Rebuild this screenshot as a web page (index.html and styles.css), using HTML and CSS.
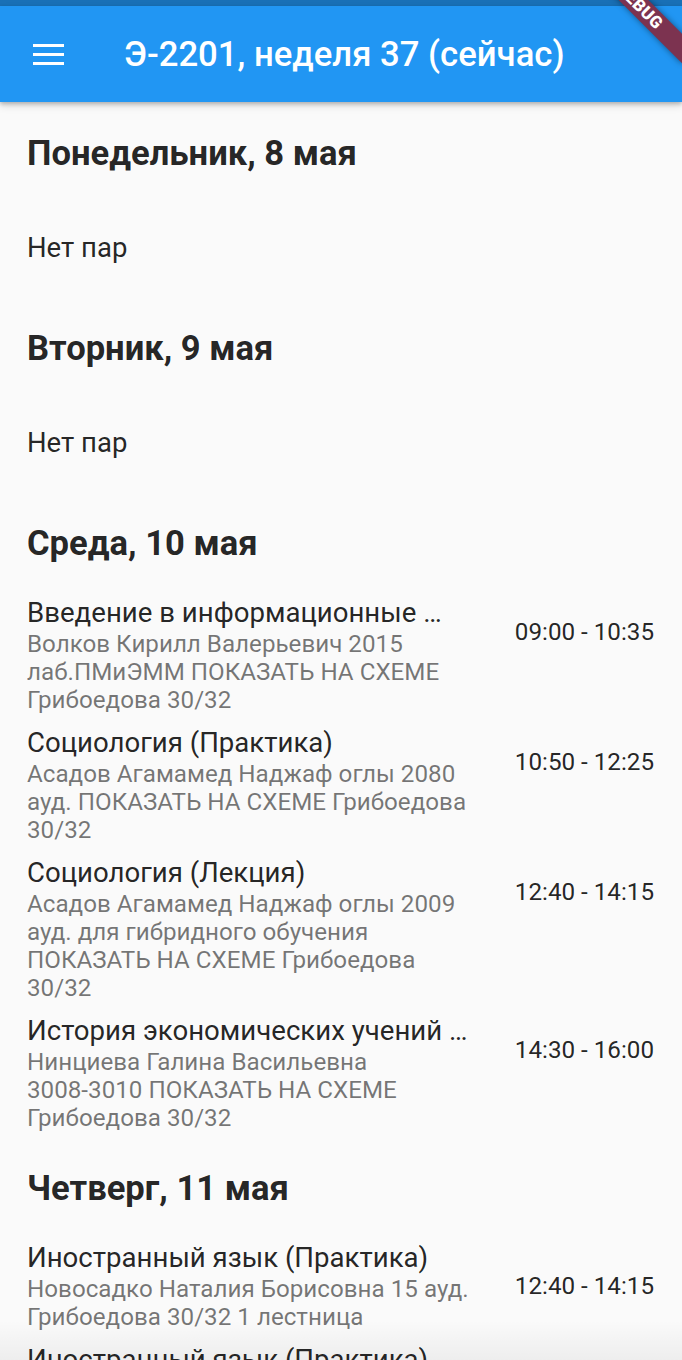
FILE: index.html
```html
<!DOCTYPE html>
<html lang="ru">
<head>
<meta charset="utf-8">
<title>Расписание</title>
<link rel="stylesheet" href="styles.css">
</head>
<body>
<div class="screen">
  <div class="statusbar"></div>
  <header class="appbar">
    <svg class="menu-icon" width="31" height="21" viewBox="0 0 31 21" aria-hidden="true">
      <rect x="0" y="0" width="31" height="3" fill="#fff"/>
      <rect x="0" y="9" width="31" height="3" fill="#fff"/>
      <rect x="0" y="18" width="31" height="3" fill="#fff"/>
    </svg>
    <h1 class="appbar-title">Э-2201, неделя 37 (сейчас)</h1>
  </header>
  <div class="ribbon">DEBUG</div>

  <main class="content">
    <section class="day">
      <h2 class="day-title">Понедельник, 8 мая</h2>
      <p class="no-pairs">Нет пар</p>
    </section>

    <section class="day">
      <h2 class="day-title">Вторник, 9 мая</h2>
      <p class="no-pairs">Нет пар</p>
    </section>

    <section class="day">
      <h2 class="day-title">Среда, 10 мая</h2>
      <div class="tile">
        <div class="tile-text">
          <div class="tile-title">Введение в информационные …</div>
          <div class="tile-sub">Волков Кирилл Валерьевич 2015 лаб.ПМиЭММ ПОКАЗАТЬ НА СХЕМЕ Грибоедова 30/32</div>
        </div>
        <div class="tile-time">09:00 - 10:35</div>
      </div>
      <div class="tile">
        <div class="tile-text">
          <div class="tile-title">Социология (Практика)</div>
          <div class="tile-sub">Асадов Агамамед Наджаф оглы 2080 ауд. ПОКАЗАТЬ НА СХЕМЕ Грибоедова 30/32</div>
        </div>
        <div class="tile-time">10:50 - 12:25</div>
      </div>
      <div class="tile">
        <div class="tile-text">
          <div class="tile-title">Социология (Лекция)</div>
          <div class="tile-sub">Асадов Агамамед Наджаф оглы 2009 ауд. для гибридного обучения ПОКАЗАТЬ НА СХЕМЕ Грибоедова 30/32</div>
        </div>
        <div class="tile-time">12:40 - 14:15</div>
      </div>
      <div class="tile">
        <div class="tile-text">
          <div class="tile-title">История экономических учений …</div>
          <div class="tile-sub">Нинциева Галина Васильевна <span class="nowrap">3008-3010</span> ПОКАЗАТЬ НА СХЕМЕ Грибоедова 30/32</div>
        </div>
        <div class="tile-time">14:30 - 16:00</div>
      </div>
    </section>

    <section class="day">
      <h2 class="day-title">Четверг, 11 мая</h2>
      <div class="tile tile-short">
        <div class="tile-text">
          <div class="tile-title">Иностранный язык (Практика)</div>
          <div class="tile-sub">Новосадко Наталия Борисовна 15 ауд. Грибоедова 30/32 1 лестница</div>
        </div>
        <div class="tile-time">12:40 - 14:15</div>
      </div>
      <div class="tile tile-short">
        <div class="tile-text">
          <div class="tile-title">Иностранный язык (Практика)</div>
          <div class="tile-sub">Новосадко Наталия Борисовна 15 ауд. Грибоедова 30/32 1 лестница</div>
        </div>
        <div class="tile-time">14:30 - 16:05</div>
      </div>
    </section>
  </main>
  <div class="bottom-shade"></div>
</div>
</body>
</html>
```

FILE: styles.css
```css
* { box-sizing: border-box; }

html, body {
  margin: 0;
  padding: 0;
  background: #fafafa;
}

body {
  font-family: Roboto, "Noto Sans", "Liberation Sans", sans-serif;
  color: rgba(0, 0, 0, 0.87);
}

.screen {
  position: relative;
  width: 682px;
  height: 1360px;
  overflow: hidden;
  background: #fafafa;
}

.statusbar {
  height: 6px;
  background: #1970b6;
}

.appbar {
  position: relative;
  z-index: 2;
  height: 96px;
  display: flex;
  align-items: center;
  padding-left: 33px;
  background: #2196f3;
  box-shadow: 0 2px 4px rgba(0, 0, 0, 0.22), 0 4px 8px rgba(0, 0, 0, 0.12);
}

.menu-icon {
  display: block;
  flex: none;
}

.appbar-title {
  margin: 0 0 0 60px;
  font-size: 34.7px;
  font-weight: 500;
  color: #fff;
  white-space: nowrap;
  line-height: 40px;
}

.ribbon {
  position: absolute;
  z-index: 3;
  left: 570px;
  top: -4.5px;
  width: 140px;
  height: 21px;
  transform: rotate(45deg);
  background: #7c3350;
  box-shadow: 0 0 6px rgba(0, 0, 0, 0.45);
  color: #fff;
  font-size: 17px;
  font-weight: 900;
  line-height: 21px;
  text-align: center;
  letter-spacing: 0.3px;
}

.content {
  padding: 1px 28px 0 27px;
}

.day {
  padding-top: 30px;
}

.day-title {
  margin: 0 0 27px;
  font-size: 34.6px;
  font-weight: 700;
  line-height: 40px;
  color: rgba(0, 0, 0, 0.87);
  white-space: nowrap;
}

.no-pairs {
  margin: 0;
  padding: 32px 0 34px;
  font-size: 27.5px;
  line-height: 32px;
}

.tile {
  display: flex;
  align-items: flex-start;
  padding: 6px 0;
}

.tile-text {
  flex: 1;
  min-width: 0;
}

.tile-title {
  font-size: 27.6px;
  line-height: 34px;
  white-space: nowrap;
  overflow: hidden;
}

.tile-sub {
  font-size: 24.2px;
  line-height: 28px;
  color: rgba(0, 0, 0, 0.54);
}

.nowrap {
  white-space: nowrap;
}

.tile-time {
  flex: none;
  margin: 20px 0 0 38px;
  font-size: 24.2px;
  line-height: 32px;
  white-space: nowrap;
}

.tile-short .tile-time {
  align-self: center;
  margin-top: 0;
}

.bottom-shade {
  position: absolute;
  left: 0;
  right: 0;
  bottom: 0;
  height: 40px;
  background: linear-gradient(to top, rgba(0, 0, 0, 0.05), rgba(0, 0, 0, 0));
  pointer-events: none;
}
```
